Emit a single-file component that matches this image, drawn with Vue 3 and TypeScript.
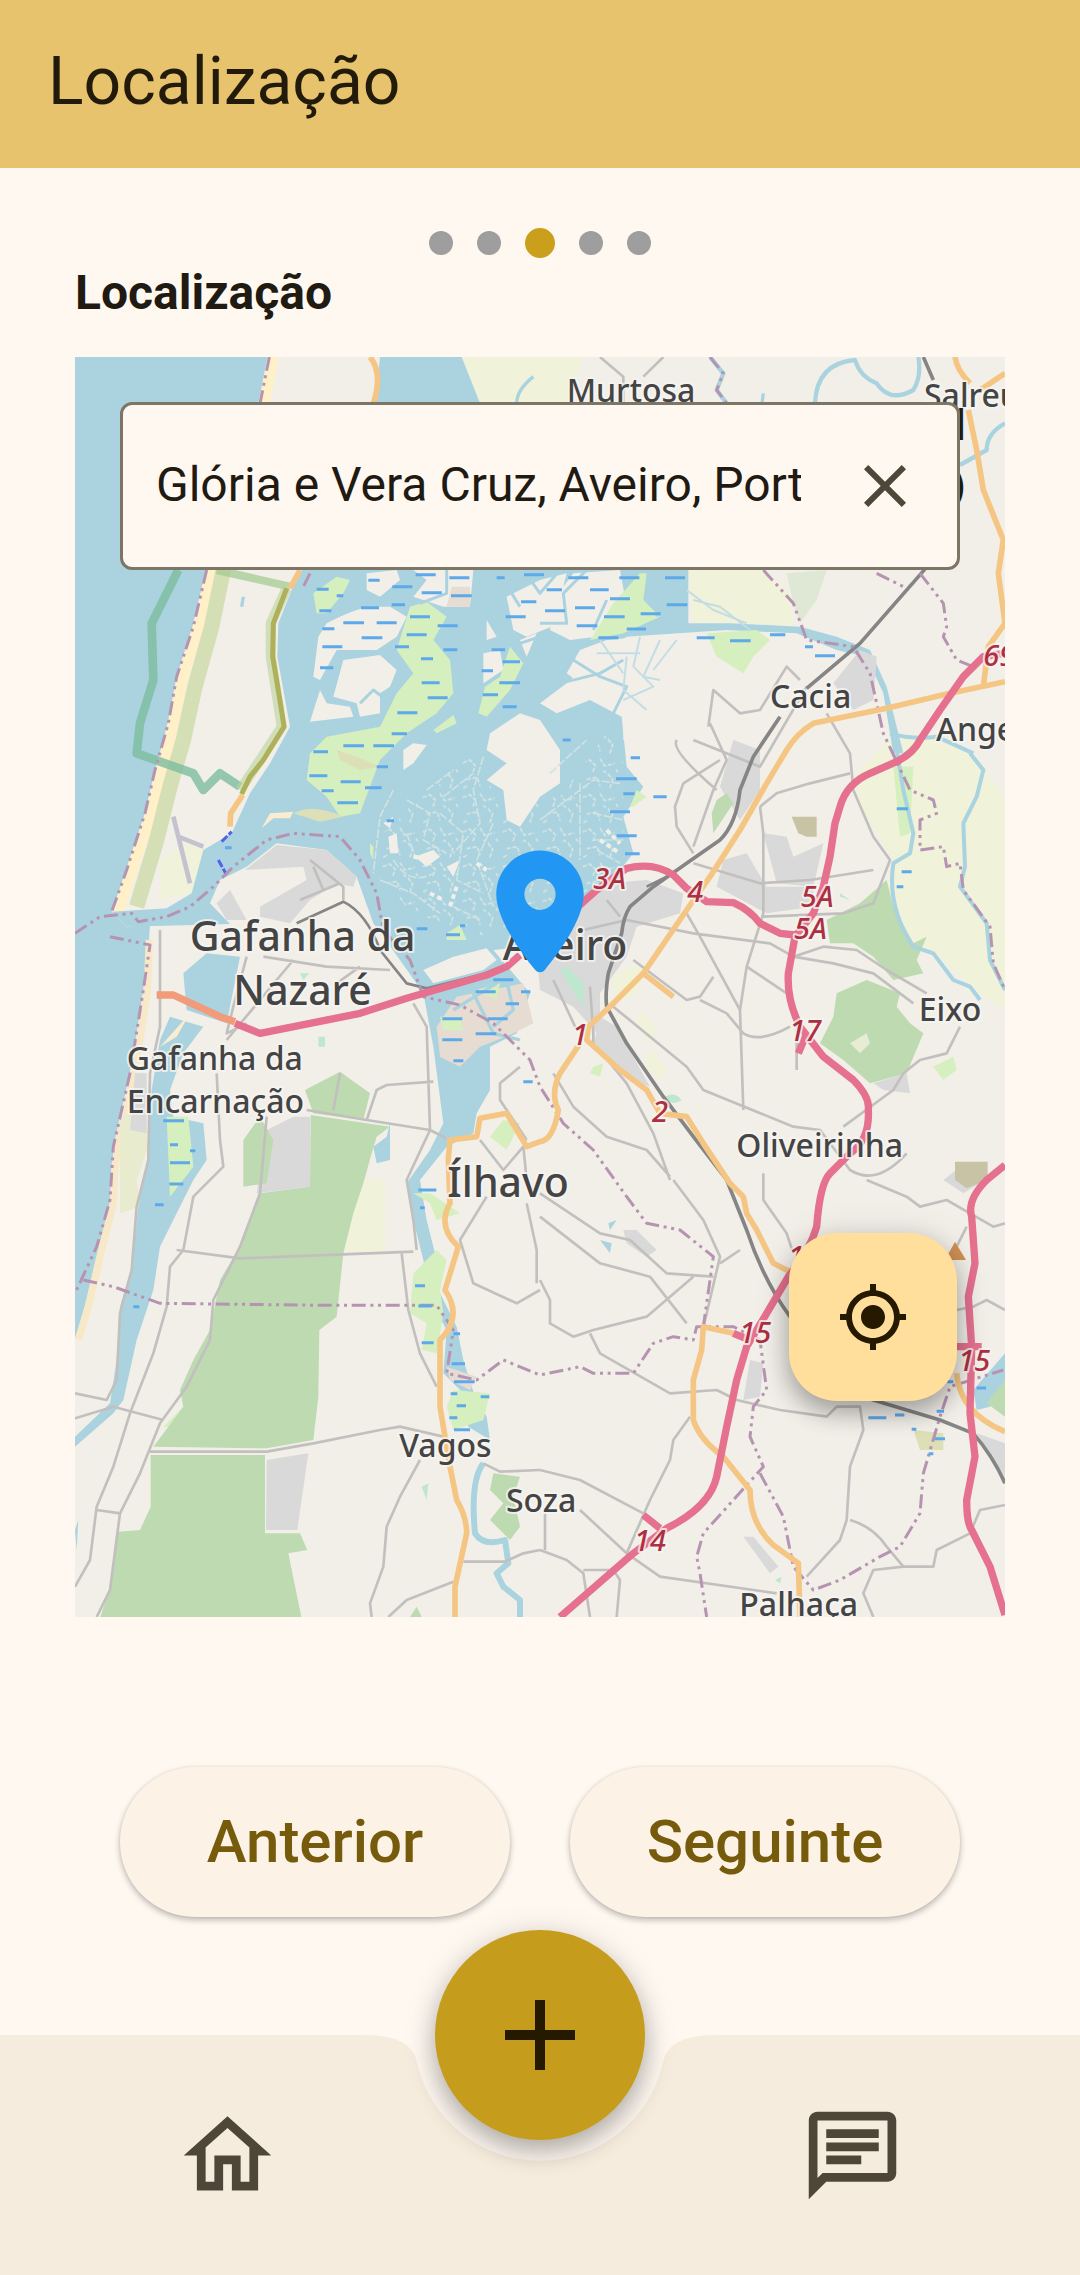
<script setup lang="ts">
import { ref } from 'vue'

interface MapLabel {
  text: string
  x: number
  y: number
  size: 'town' | 'city'
}

interface RoadRef {
  text: string
  x: number
  y: number
}

const address = ref('Glória e Vera Cruz, Aveiro, Portugal')
const steps = [1, 2, 3, 4, 5]
const currentStep = ref(3)

const labels: MapLabel[] = [
  { text: 'Murtosa', x: 1520, y: 185, size: 'town' },
  { text: 'Salreu', x: 2592, y: 202, size: 'town' },
  { text: 'Cacia', x: 2130, y: 1105, size: 'town' },
  { text: 'Angeja', x: 2628, y: 1202, size: 'town' },
  { text: 'Gafanha da', x: 389, y: 1832, size: 'city' },
  { text: 'Nazaré', x: 520, y: 1995, size: 'city' },
  { text: 'Gafanha da', x: 200, y: 2190, size: 'town' },
  { text: 'Encarnação', x: 200, y: 2318, size: 'town' },
  { text: 'Aveiro', x: 1328, y: 1860, size: 'city' },
  { text: 'Eixo', x: 2576, y: 2042, size: 'town' },
  { text: 'Oliveirinha', x: 2029, y: 2450, size: 'town' },
  { text: 'Ílhavo', x: 1162, y: 2570, size: 'city' },
  { text: 'Vagos', x: 1018, y: 3350, size: 'town' },
  { text: 'Soza', x: 1338, y: 3515, size: 'town' },
  { text: 'Palhaça', x: 2038, y: 3828, size: 'town' },
]

const roadRefs: RoadRef[] = [
  { text: '3A', x: 1600, y: 1648 },
  { text: '4', x: 1882, y: 1687 },
  { text: '5A', x: 2222, y: 1702 },
  { text: '5A', x: 2202, y: 1798 },
  { text: '17', x: 2188, y: 2104 },
  { text: '1', x: 1536, y: 2114 },
  { text: '2', x: 1776, y: 2346 },
  { text: '15', x: 2038, y: 3008 },
  { text: '14', x: 1722, y: 3634 },
  { text: '15', x: 2695, y: 3092 },
  { text: '69', x: 2770, y: 978 },
  { text: '16', x: 2184, y: 2782 },
]

const marshPoints: [number, number, number][] = [
  [770, 748, 36], [778, 812, 36], [787, 866, 36], [787, 920, 60], [780, 983, 40], [925, 721, 34],
  [997, 740, 60], [1067, 704, 60], [1085, 758, 60], [1168, 713, 60], [1173, 767, 62], [903, 803, 54],
  [995, 794, 40], [850, 848, 62], [950, 848, 60], [905, 893, 62], [1050, 830, 60], [1040, 884, 60],
  [1005, 920, 42], [1133, 857, 60], [1150, 929, 42], [1083, 956, 36], [1085, 1028, 54], [1103, 1073, 60],
  [1012, 1118, 60], [995, 1181, 46], [850, 1217, 62], [940, 1217, 62], [760, 1235, 44], [1392, 704, 60],
  [1383, 785, 46], [1337, 830, 60], [1295, 929, 40], [1328, 965, 52], [1265, 992, 34], [1318, 1028, 62],
  [1268, 1064, 46], [1328, 1100, 42], [1310, 713, 24], [830, 767, 20], [1525, 713, 60], [1678, 713, 60],
  [1815, 713, 60], [1460, 749, 46], [1590, 749, 56], [1650, 776, 60], [1455, 812, 60], [1545, 803, 60],
  [1820, 794, 62], [1632, 830, 62], [1742, 821, 60], [1550, 857, 62], [1700, 867, 58], [1615, 893, 60],
  [2010, 902, 62], [1910, 893, 54], [2130, 884, 46], [2265, 947, 60], [2235, 920, 24], [1508, 1200, 24],
  [1712, 1253, 28], [748, 1307, 54], [842, 1325, 60], [785, 1352, 36], [832, 1388, 62], [950, 1280, 34],
  [915, 1343, 50], [980, 1442, 22], [1070, 1766, 32], [1158, 1784, 42], [1200, 1757, 16], [1300, 1919, 60],
  [1247, 1955, 60], [1383, 1955, 28], [1337, 1991, 40], [1147, 2036, 60], [1283, 2036, 60], [1147, 2099, 60],
  [1247, 2081, 62], [1180, 2162, 30], [1390, 2225, 28], [310, 2342, 62], [330, 2414, 24], [330, 2468, 60],
  [390, 2432, 16], [495, 1523, 20], [1668, 1316, 62], [1690, 1361, 34], [1780, 1370, 40], [1650, 1415, 60],
  [1670, 1487, 60], [1695, 1541, 44], [2510, 1406, 34], [2525, 1595, 30], [2510, 1640, 20], [328, 2532, 42],
  [285, 2594, 26], [1075, 2550, 54], [1080, 2603, 14], [1065, 2837, 30], [1075, 2898, 40], [1085, 3008, 36],
  [1180, 2981, 20], [1175, 3071, 40], [1182, 3125, 62], [1172, 3161, 20], [1190, 3197, 28], [1168, 3233, 24],
  [1182, 3269, 48], [1262, 3170, 26], [220, 2900, 18], [2425, 3233, 54], [2505, 3225, 28], [2555, 3268, 14],
  [2630, 3214, 22], [2625, 3296, 30], [2606, 3341, 14], [2750, 3144, 28], [2662, 3125, 18],
]

const marshPath = marshPoints.map(([x, y, w]) => `M${x} ${y}h${w}`).join('')
</script>

<template>
  <div class="page">
    <header class="app-bar">
      <h1>Localização</h1>
    </header>

    <main class="content">
      <div class="steps">
        <span
          v-for="step in steps"
          :key="step"
          class="step"
          :class="{ active: step === currentStep }"
        ></span>
      </div>

      <h2>Localização</h2>

      <section class="map">
        <svg class="map-canvas" viewBox="45 51 2790 3780" aria-hidden="true">
          <defs>
            <pattern id="salt-pans" width="120" height="104" patternUnits="userSpaceOnUse">
              <path d="M8 20L30 12 46 28 38 50M60 8L74 30 104 22M20 70L52 64 60 90M84 54L98 70 90 96M70 44L78 50M10 96L24 88M108 40L114 48" fill="none" stroke="#d6e4e3" stroke-width="5" stroke-dasharray="13 5" />
            </pattern>
          </defs>
          <rect x="45" y="51" width="2790" height="3780" fill="#f2efe9" />

          <!-- farmland -->
          <g fill="#f0f2da">
            <path d="M1205 51H1570L1520 190H1260Z" />
            <path d="M1885 690H2110L2190 760 2200 860 2070 850 1900 865Z" />
            <path d="M2480 1200L2620 1190 2740 1240 2835 1370V2010L2760 1960 2640 1850 2520 1800 2480 1640 2500 1560 2400 1400 2380 1310Z" />
            <path d="M300 1560L390 1500 440 1530 395 1660 300 1680Z M905 2520H975V2735H850Z" />
            <path d="M1660 1900L1760 1870 1730 1960 1660 1990Z M1740 2010L1790 2060 1770 2110 1730 2060Z M1770 2130L1825 2190 1800 2220 1750 2180Z" />
          </g>

          <!-- ocean and coast -->
          <path d="M45 51H628L600 190 440 690 400 860 350 1010 325 1150 285 1290 255 1420 200 1590 155 1715 200 1760 270 1755 265 1830 250 1950 230 2080 210 2200 180 2330 160 2420 155 2580 110 2750 75 2900 45 3000Z" fill="#aad3df" />
          <path d="M640 51L612 190 455 690 415 860 368 1010 340 1150 305 1290 273 1420 215 1590 175 1715" class="line" stroke="#fff0c8" stroke-width="34" />
          <path d="M490 690L455 860 405 1040 370 1200 330 1340 290 1500 230 1700" class="line" stroke="#d5dfb5" stroke-width="46" />
          <path d="M268 1800L262 1950 240 2100 215 2230 185 2360 165 2480 160 2590 120 2750 85 2900 55 3000" class="line" stroke="#f7e9c8" stroke-width="22" />
          <path d="M180 2330L250 2300 265 2420 230 2520 240 2600 180 2620Z" fill="#e8ebce" />

          <!-- lagoon -->
          <g fill="#aad3df">
            <path d="M960 51H1205L1260 190H945Z" />
            <path d="M725 690L695 750 655 850 652 950 690 1160 630 1270 570 1360 515 1480 430 1530 395 1660 320 1705 155 1715 200 1760 510 1752 450 1690 480 1620 560 1580 650 1510 800 1530 890 1610 940 1750 1020 1860 1090 1960 1120 2120 1150 2350 1110 2430 1040 2530 1060 2640 1090 2760 1110 2880 1160 2970 1150 3100 1210 3160 1225 3260 1290 3300 1280 3230 1245 3170 1210 3060 1190 2960 1140 2860 1130 2760 1100 2640 1080 2520 1160 2420 1240 2380 1250 2320 1290 2250 1290 2120 1370 2080 1410 1960 1300 1830 1400 1820 1460 1780 1560 1690 1680 1590 1720 1540 1690 1430 1750 1340 1700 1280 1685 1130 1590 1080 1490 1120 1440 1090 1520 1030 1610 950 1700 890 2000 870 2210 880 2330 930 2420 950 2470 1060 2500 1240 2530 1240 2480 1040 2430 930 2330 890 2220 860 2010 850 1885 850 1885 690Z" />
            <path d="M370 1900L440 1840 540 1850 500 2050 380 2010Z M300 2100L330 2030 430 2060 370 2140 330 2250 340 2330 430 2350 440 2460 400 2520 350 2620 300 2720 280 2850 230 3000 190 3180 160 3220 45 3320V3290L150 3190 170 3060 180 2900 215 2780 235 2600 260 2470 275 2250Z" />
            <path d="M980 2390L990 2350 990 2460 950 2470 940 2420Z M1620 2700L1655 2710 1650 2740Z M1645 2650L1670 2640 1650 2670Z M2740 3150L2835 3040V3120L2790 3200 2750 3210Z" />
          </g>
          <path d="M45 3570L55 3540 50 3630Z" fill="#aad3df" />
          <path d="M1100 1350L1230 1250 1320 1380 1500 1370 1640 1180 1690 1200 1690 1560 1560 1690 1280 1790 1060 1720 960 1620 970 1480Z" fill="url(#salt-pans)" />

          <!-- lagoon islands -->
          <g fill="#f2efe9">
            <path d="M920 700L1010 690 1020 720 960 770 920 750Z M1060 690L1240 690 1230 800 1150 800 1060 770 1100 720Z M860 820L920 800 990 800 1040 830 1010 890 950 930 830 930 780 1020 760 1010 775 890 800 850Z" />
            <path d="M850 960L960 945 1010 990 990 1040 960 1060 960 1120 900 1130 890 1090 820 1070Z M780 1050L800 1090 870 1100 880 1130 750 1145Z" />
            <path d="M1280 840L1310 890 1280 900Z M1340 770L1440 720 1520 700 1500 780 1500 850 1400 890 1360 870Z M1270 940L1320 930 1330 990 1270 1030Z M1380 900L1430 880 1400 950Z" />
            <path d="M1290 1180L1380 1120 1440 1140 1500 1230 1500 1330 1440 1370 1380 1460 1340 1440 1330 1350 1280 1320 1340 1270 1280 1230Z M1540 700L1680 690 1700 800 1610 890 1530 900 1470 870 1480 780Z M1560 930L1640 900 1880 880 1870 1000 1830 1060 1800 1190 1690 1200 1690 1080 1600 1060 1520 1000Z" />
            <path d="M1030 1230L1060 1210 1100 1215 1060 1270 1030 1290Z M970 1450L1000 1430 990 1465Z M985 1490L1010 1480 1015 1540 990 1540Z M1065 1550L1120 1530 1140 1550 1100 1580Z M1160 1580L1200 1560 1180 1610Z" />
            <path d="M1090 1890L1180 1850 1280 1825 1310 1860 1270 1890 1120 1930Z M1390 2050L1500 2030 1560 2100 1470 2260 1430 2330 1330 2300 1310 2200Z" />
          </g>
          <g fill="#d6efbf">
            <path d="M760 760L830 710 870 720 850 760 800 820 770 820Z M1050 800L1100 785 1160 830 1120 900 1170 960 1180 1060 1130 1120 1040 1180 960 1260 900 1420 840 1430 800 1370 740 1320 750 1240 800 1190 960 1160 1010 1060 1060 1000 1010 930Z" />
            <path d="M1120 1170L1180 1125 1190 1150 1130 1180Z M1350 920L1390 970 1350 1050 1280 1130 1255 1120 1275 1040 1320 1010Z M1590 900L1660 790 1740 700 1760 700 1750 780 1800 830 1690 880Z M1940 880L2090 870 2130 900 2080 950 2050 1000 1970 950Z" />
            <path d="M1060 2560L1110 2560 1200 2620 1130 2640 1110 2590Z M1060 2800L1130 2730 1160 2760 1140 2850 1150 2920 1130 3040 1085 3030 1100 2950 1050 2920Z M1180 3150L1290 3160 1270 3240 1180 3270 1160 3200Z M320 2330L385 2330 400 2480 330 2570Z M930 1510L940 1520 940 1560 930 1540Z M1160 1780L1200 1755 1220 1800 1160 1800Z" />
            <path d="M1710 1400L1730 1350 1760 1370 1720 1400Z M1600 2180L1630 2170 1620 2210 1590 2200Z M2620 2180L2680 2150 2690 2190 2650 2220Z M1380 2350L1330 2340 1290 2390 1340 2430Z M2500 1280L2560 1280 2550 1480 2520 1490Z M310 3260L370 3200 370 3260Z" />
          </g>
          <path d="M700 1420Q760 1390 850 1430L780 1445Z M830 1230L890 1250 960 1280 900 1290 840 1260Z M2560 3270L2650 3280 2650 3330 2580 3330Z" fill="#dde0b6" />
          <path d="M605 1465L630 1420 700 1415 690 1435 640 1435Z M300 2120L390 2020 350 2090Z" fill="#f9ecd0" />
          <path d="M1190 1970L1390 1930 1420 2050 1360 2080 1260 2120 1200 2180 1140 2150 1130 2060Z M1160 3080L1250 3110 1230 3150 1170 3120Z M1175 740H1230V800H1160Z" fill="#e7dcd2" />
          <path d="M1140 2030L1200 2030 1210 2070 1150 2070Z M1250 1950L1320 1930 1310 1980Z" fill="#d6efbf" />
          <path d="M1240 1960L1300 2080 1380 2100M1180 2010L1260 1960 1310 1930M1340 1920L1360 2010 1300 2060" class="line" stroke="#aad3df" stroke-width="10" />

          <!-- lagoon channels -->
          <path d="M1050 690L1000 760 900 800 780 850M1160 690V760L1080 790M1390 690L1440 760 1500 690M1300 900L1380 910 1440 890M1330 720L1380 800M1440 850L1520 850 1510 760 1580 690M1640 780L1600 870M1820 700L1790 830M1690 960L1620 1000 1500 1030M1540 960L1620 1010 1700 1040 1660 1120M900 1090L940 1050 980 1080" class="line" stroke="#aad3df" stroke-width="9" />
          <path d="M1700 950L1690 1050 1760 1110M1800 900L1750 1010 1800 1020M1620 900L1690 1000M1740 890L1720 980 1780 1040 1690 1080M1610 940L1740 940M1850 900L1780 990M1880 750L1960 810 2060 850M1900 780L1980 800 2070 870" class="line" stroke="#c3dde3" stroke-width="6" />
          <path d="M1270 1250L1240 1350 1260 1450 1180 1540M1150 1370L1240 1300M1100 1350L1180 1290M1000 1350L960 1430 940 1600M1040 1380L1110 1420 1090 1500 1160 1540M1140 1420L1210 1480 1190 1620 1270 1660M1000 1560Q1050 1640 1120 1600M1040 1480L1070 1560M1300 1450L1250 1560 1300 1700M1440 1440L1600 1320 1680 1330M1560 1330V1560M1600 1500H1690M1600 1420L1690 1440M1610 1530L1680 1570M960 1620L1060 1660 1140 1720M1180 1700L1260 1740M1470 1300L1580 1200" class="line" stroke="#d0e2e3" stroke-width="5" stroke-dasharray="26 6" />
          <path d="M1060 1550L1130 1560M1110 1660L1150 1680M1190 1640L1170 1700M1250 1570L1280 1590M1620 1500L1680 1540M1640 1470L1680 1510M1000 1500V1540" class="line" stroke="#f2efe9" stroke-width="12" stroke-dasharray="14 10" />

          <!-- harbour and built-up areas -->
          <g fill="#d9d9d9">
            <path d="M555 1590L650 1515 800 1530 890 1610 880 1640 830 1630 750 1680 690 1750 600 1730 600 1700 740 1620 730 1580Z M470 1690L510 1650 560 1740 500 1740Z" />
            <path d="M620 2370L700 2330 750 2330V2540L590 2560Z M620 3360L745 3340 712 3570H618Z M225 2200H260V2380L210 2370Z" />
            <path d="M2320 1030L2400 930 2450 950 2440 1080 2380 1110Z M2020 1200L2100 1230 2100 1350 2040 1440 1980 1340Z M1990 1560L2060 1540 2120 1640 2260 1640 2260 1700 2120 1720 1970 1640Z M2110 1480L2180 1490 2200 1550 2290 1510 2260 1640 2150 1630Z" />
            <path d="M1530 1700L1640 1630 1760 1620 1870 1660 1860 1720 1730 1760 1700 1850 1620 1960 1620 2090 1540 2000 1440 1950 1430 1840 1500 1800Z M1620 2030L1670 2060 1770 2240 1710 2220 1600 2120Z M2440 2230L2540 2200 2550 2260 2470 2250Z M1690 2670L1730 2670 1790 2730 1760 2750 1700 2710Z M2070 3060L2110 3070 2100 3170 2050 3180Z M2050 3590L2080 3590 2155 3680 2130 3700Z M2750 3280L2835 3310V3410Z M2650 2520L2700 2480 2760 2530 2710 2560Z" />
          </g>
          <path d="M2195 1430H2270V1490H2240L2215 1480Z M2685 2465H2783V2520L2720 2545 2685 2520Z" fill="#c8c3a4" />
          <path d="M1500 1890L1520 1880 1570 1930 1570 2000 1550 1970ZM1810 2275Q1840 2250 1865 2280 1840 2300 1810 2275ZM2340 1660L2370 1680 2340 1670ZM2145 3720L2165 3710 2160 3730ZM775 2090H795V2120H775ZM720 1900H748L730 1920ZM1085 3440L1105 3430 1100 3480Z" fill="#bde8cf" />

          <!-- forests -->
          <g fill="#bddab1">
            <path d="M735 2250L840 2195 930 2260 910 2340 760 2320Z M752 2325L990 2360 950 2390 935 2440 910 2530 880 2620 850 2740 830 2930 778 2970 775 3170 760 3300 620 3325 280 3320 370 3200 360 3150 400 3060 450 2970 480 2820 540 2720 600 2560 750 2540Z" />
            <path d="M272 3345H615V3580H720L742 3630 685 3640 725 3835H120L150 3740 175 3575 240 3570 272 3500Z M550 2400L600 2330 640 2400 620 2530 550 2540Z" />
            <path d="M2300 1740L2400 1690 2480 1620 2500 1700 2560 1810 2600 1790 2570 1860 2590 1900 2500 1920 2440 1850 2380 1810 2310 1810Z M2330 1960L2420 1920 2520 1960 2510 2000 2550 2050 2590 2080 2540 2200 2430 2230 2350 2160 2280 2110 2320 2030Z" />
            <path d="M1970 1380L2000 1360 2020 1390 1980 1450 1960 1480 1955 1420Z M1300 3400L1380 3410 1360 3470 1380 3560 1350 3600 1290 3540 1330 3490 1290 3450Z M2780 3190L2835 3120V3230Z M1050 3831L1070 3800 1085 3831Z" />
            <path d="M2180 700L2300 690 2270 780 2220 850 2200 790Z" opacity="0.35" />
          </g>
          <path d="M2370 2110L2420 2080 2430 2110 2400 2140Z" fill="#e7ecd4" />

          <!-- reserve borders -->
          <path d="M355 690L275 850 280 1020 240 1150 230 1240 400 1300 430 1350 480 1300 540 1340" class="line" stroke="#7cbd9e" stroke-width="26" opacity="0.8" />
          <path d="M470 690L690 740" class="line" stroke="#9fc98b" stroke-width="24" opacity="0.7" />
          <path d="M680 745L632 850 632 950 665 1160 600 1260 560 1320 540 1350" class="line" stroke="#b9d49b" stroke-width="30" opacity="0.6" />

          <!-- rivers -->
          <g class="line" stroke="#a9d3df">
            <path d="M2265 190Q2270 70 2385 60Q2400 110 2450 130Q2490 190 2560 150 2585 110 2575 51M2835 250Q2780 280 2780 330L2700 375M1950 51L1990 100 1970 150 2000 190" stroke-width="13" />
            <path d="M2500 1170L2530 1350 2560 1480 2550 1540 2500 1570Q2480 1700 2560 1820L2620 1840 2680 1920 2730 1940 2760 1980M2730 1240L2770 1290 2750 1370 2710 1450 2715 1580 2700 1640 2780 1750 2790 1860 2835 1950M2490 1180Q2560 1200 2630 1190L2740 1240" stroke-width="12" />
            <path d="M1270 3370Q1230 3420 1245 3580 1270 3620 1335 3600L1345 3670 1310 3700 1330 3740 1380 3780 1380 3831" stroke-width="18" />
            <path d="M1420 110Q1370 150 1370 190M2110 160L2105 200M550 770L545 800" stroke-width="10" />
          </g>

          <!-- minor roads -->
          <g class="line" stroke="#c2c0be" stroke-width="8">
            <path d="M1620 51L1690 110 1690 190M1810 51L1750 110M2240 1040L2100 1280 1900 1200M1950 1150L2000 1260 1960 1350 1900 1520M1945 1160L1960 1050 2040 1120 2100 1110 2180 980 2220 1020M1980 1260L1870 1330 1845 1400 1850 1460 1900 1540M1850 1200Q1830 1230 1970 1350" />
            <path d="M2300 1120L2370 1240 2380 1350 2440 1490 2490 1560 2440 1690 2350 1720 2110 1730M2100 1400L2110 1480 2110 1720 2060 1880 2040 2010 2050 2310M2370 1300L2250 1330 2150 1360 2100 1400M1900 1570L2000 1600 2100 1630 2250 1620 2440 1590" />
            <path d="M1570 1770L1700 1740 1900 1780 2130 1810 2200 1850 2320 1870 2440 1900 2560 1990M2200 1850L2290 1820 2390 1830 2480 1890 2600 1960M2700 2060L2660 2140 2580 2160 2530 2200 2500 2250 2350 2360M1880 1720L1920 1790 2040 2010M1720 1860L1840 1950 1880 1980 1920 1970 1960 1910M1920 1980L2000 2020 2050 2080Q2100 2110 2190 2060M2060 1880L2180 1960 2210 2020 2210 2190" />
            <path d="M1660 2000L1880 2180 1930 2250 2200 2360 2280 2370 2370 2490Q2450 2540 2540 2440M1480 2200L1540 2300 1640 2390 1760 2430 1830 2510M1610 2120L1700 2230 1780 2380 1830 2520M1640 1680L1680 1730M1480 1920L1550 2070M1590 1940L1600 2080 1600 2120" />
            <path d="M1840 2520L1930 2640 1980 2750 1940 2920 1930 2960M1440 2630L1620 2770 1770 2810 1880 2950M1440 2560L1620 2680 1710 2700 1820 2800 1960 2810M1980 2770L2040 2730M1900 2810L1760 2930 1600 2970 1540 2990 1470 2950 1470 2880 1440 2820M1590 2980L1620 3040 1830 3160 1970 3150 2030 3180 2160 3210 2300 3230 2330 3200 2400 3200 2410 3270 2370 3380 2360 3540 2340 3600 2240 3710M2370 3540Q2440 3560 2480 3620L2530 3680 2620 3680 2630 3630 2730 3580 2760 3510 2835 3495M2530 3680L2440 3690 2410 3760 2440 3831" />
            <path d="M2110 2500L2110 2580 2180 2680 2200 2740M2420 2520L2540 2570 2580 2600 2660 2580 2730 2620 2800 2660 2835 2650M2720 2660L2690 2720M2690 2910L2740 2900 2780 2880 2835 2910M1440 3390L1560 3420 1750 3520M1890 3230L1840 3300 1830 3360 1770 3480 1700 3640 1800 3710 2150 3760M1560 3510L1700 3640M1440 3630L1520 3660 1570 3700 1590 3831M1570 3690H1660L1680 3720 1670 3831M1455 3520V3630" />
            <path d="M610 1850L800 1880 990 1890M700 1860L600 1980 500 2100M560 1850L520 2000 500 2080 560 2050M900 1880L830 1930M470 2200L480 2400 490 2480 400 2570 370 2730 330 2780 320 2900 280 3040 210 3220 160 3380 110 3500 90 3660 45 3740M620 2330L600 2560 540 2720 460 2880 450 3000 380 3140 300 3250 240 3400 180 3520 150 3750 110 3831M350 2730L540 2755 1060 2735M270 3335H620L760 3310 960 3270 1020 3260 1150 3290" />
            <path d="M1060 1990L1100 2060 1110 2370 1160 2395M920 2340L740 2310M1110 2370L920 2340 950 2250 980 2235 1120 2225M1110 2370L1040 2520 1060 2640 1070 2730M1025 2740L1045 2910 1080 3040 1130 3140M300 1770V2060L270 2200 265 2460 230 2600 215 2790 180 2920 170 3120 140 3180 45 3160M45 3235L160 3200 310 3240M110 3510L180 3520M1280 2570L1200 2700 1240 2830 1370 2890 1440 2850M1400 2590L1430 2730 1430 2830M1080 3360L1020 3470 980 3560 970 3680 930 3790 935 3831M1270 3370L1320 3395 1440 3390M1210 3665H1335L1390 3640 1440 3630M985 3831L1040 3780 1180 3725M1260 2400L1330 2490 1390 2420 1400 2520M1380 2180L1320 2230 1320 2280 1400 2400M840 2200L820 2310M750 1560L850 1640 850 1680M760 1580L790 1650M720 1680L840 1630" />
          </g>
          <path d="M340 1430L390 1630M355 1490L430 1520" class="line" stroke="#c4c2cf" stroke-width="14" />
          <path d="M485 1505L515 1475M475 1560L500 1605" class="line" stroke="#5262ee" stroke-width="9" stroke-dasharray="24 6" />

          <!-- railways -->
          <g class="line" stroke="#858585" stroke-width="11">
            <path d="M2590 51L2620 120M2610 670L2400 910 2240 1045M2160 1130L2080 1250 2040 1350Q2030 1450 1980 1500L1880 1570 1780 1640 1710 1700Q1690 1730 1685 1780L1645 1900Q1635 1960 1640 2000L1700 2110 1810 2270 1900 2390 2000 2520 2060 2670Q2110 2820 2190 2930L2300 3120 2440 3180 2640 3240 2740 3280Q2800 3350 2835 3430" />
            <path d="M710 1750L850 1685Q920 1720 960 1830L1040 1930 1100 1945 1280 1900M1840 1600L1760 1640" stroke-width="8" />
          </g>

          <!-- administrative borders -->
          <g class="line" stroke="#b694b1" stroke-width="9" stroke-dasharray="42 14 9 14 9 14">
            <path d="M628 51L600 190M440 690L400 860 350 1010 325 1150 285 1290 255 1420 200 1590 155 1715M750 700L725 750M45 1780L120 1730 215 1720 235 1745 320 1730 390 1700 460 1640 520 1580 620 1500 700 1480 840 1490 900 1560 950 1660 970 1770 1050 1860 1090 1970 1200 1995 1300 2050 1410 2160 1440 2240 1510 2350 1600 2430 1700 2570 1760 2650 1860 2670 1960 2750 1930 2960M150 1790L270 1815 250 1950 210 2200 160 2420 150 2580 110 2720 45 2860" />
            <path d="M70 2820L160 2840 300 2890 800 2896 1130 2896 1180 2970 1160 3100 1250 3120 1330 3060 1440 3105 1560 3080 1600 3100 1720 3100 1780 3010 1840 2990 1900 3000 1910 2960 2020 2960 2100 3000 2120 3150 2080 3200 2070 3290 2110 3380 1930 3580 1910 3650 1920 3700 1940 3831M2100 3400L2170 3530 2200 3680 2260 3750 2340 3720 2460 3650 2520 3620 2580 3520 2590 3400 2640 3230 2670 3140 2830 3090" />
            <path d="M1950 51L1990 100 1970 150 2000 190M2110 690L2200 790 2240 900 2380 920 2430 1000 2470 1180 2550 1350 2620 1380 2630 1420 2580 1440V1530L2650 1520 2660 1580 2700 1570 2710 1650 2790 1760 2800 1870 2835 1950M2450 700L2530 740M2580 700L2650 790 2660 860 2650 890 2690 960 2740 980" />
          </g>

          <path :d="marshPath" class="line" stroke="#5da9ea" stroke-width="9" />

          <!-- main roads -->
          <g class="line" stroke="#f5c683" stroke-width="17">
            <path d="M930 51Q970 100 940 190M720 690L690 745M548 1365L512 1420 510 1460" />
            <path d="M2835 1025L2670 1060 2480 1105 2260 1150Q2210 1180 2180 1230L2120 1330 2040 1470 1950 1610 1880 1710 1750 1900 1650 2000 1585 2060 1580 2100 1680 2190 1760 2250 1800 2320 1880 2330 1930 2410 2010 2530 2050 2570 2060 2620 2090 2670 2140 2770 2190 2795M1750 1900L1840 1970" />
            <path d="M1560 2110L1500 2200Q1470 2260 1495 2310 1480 2400 1440 2405L1400 2420 1340 2320 1260 2335 1250 2390 1170 2400 1165 2455 1170 2590Q1130 2660 1195 2720L1155 2850Q1210 2930 1140 3000V3200L1170 3380 1190 3480Q1220 3530 1220 3580L1185 3740V3831" />
            <path d="M2020 2980L1930 2960 1925 3030 1900 3120V3240Q1920 3300 1990 3350L2070 3450Q2070 3550 2140 3615L2215 3670 2220 3831M2690 3100Q2700 3220 2835 3275" />
            <path d="M2685 51Q2690 90 2730 130M2725 210L2750 330 2770 450 2830 600 2815 700 2835 850 2785 920 2770 1040M2760 150L2835 100" />
          </g>
          <path d="M680 745L640 850 638 950Q660 1080 672 1160L610 1260 570 1310 545 1362" class="line" stroke="#aeb05a" stroke-width="15" />
          <path d="M290 1965H340L480 2030 525 2045" class="line" stroke="#f29b7b" stroke-width="22" />
          <g class="line" stroke="#e5718f" stroke-width="22">
            <path d="M525 2050L600 2080 900 2020 1040 1975 1280 1905 1340 1880 1380 1845M1520 1730L1610 1650 1700 1585Q1780 1565 1840 1605L1880 1645 1940 1685 2020 1688Q2070 1710 2100 1750L2160 1780 2205 1785" />
            <path d="M2835 940L2770 950 2710 1010 2640 1110 2580 1200Q2560 1240 2510 1265L2430 1300Q2360 1330 2340 1400L2325 1450 2310 1550 2290 1640 2260 1720 2205 1790 2185 1900Q2180 1980 2220 2060L2290 2150 2380 2220Q2430 2270 2425 2310 2430 2400 2370 2440L2310 2500Q2280 2530 2270 2660 2250 2730 2185 2810L2120 2920 2060 3020 2030 3120 2000 3260 1970 3410Q1950 3500 1820 3565L1720 3640 1500 3831M1750 3525L1800 3565M2215 2140L2240 2080M2020 2980L2070 3000M2690 3020H2765" />
            <path d="M2835 2475L2780 2520Q2720 2580 2735 2630L2745 2770 2725 2870 2735 3020 2730 3220 2745 3350 2720 3480Q2720 3550 2735 3570L2790 3680 2835 3825" />
          </g>
          <path d="M2655 2760L2685 2705 2718 2760Z" fill="#cf9153" />

          <!-- place names and exit numbers -->
          <g class="place">
            <text v-for="label in labels" :key="label.text + label.y" :x="label.x" :y="label.y" :class="label.size">{{ label.text }}</text>
          </g>
          <g class="exit">
            <text v-for="(exit, i) in roadRefs" :key="i" :x="exit.x" :y="exit.y">{{ exit.text }}</text>
          </g>

          <!-- selected position -->
          <g transform="translate(1215 1494) scale(18.75)">
            <path fill="#2196f3" d="M12 2C8.13 2 5 5.13 5 9c0 4.17 4.42 9.92 6.24 12.11.4.48 1.13.48 1.53 0C14.58 18.92 19 13.17 19 9c0-3.87-3.13-7-7-7zm0 9.5a2.5 2.5 0 0 1 0-5 2.5 2.5 0 0 1 0 5z" />
          </g>
        </svg>

        <p class="hint">d<br />)</p>

        <form class="search" @submit.prevent>
          <input v-model="address" type="text" aria-label="Morada" />
          <button type="button" class="clear" aria-label="Limpar" @click="address = ''">
            <svg viewBox="0 0 24 24" aria-hidden="true">
              <path d="M19 6.41L17.59 5 12 10.59 6.41 5 5 6.41 10.59 12 5 17.59 6.41 19 12 13.41 17.59 19 19 17.59 13.41 12z" />
            </svg>
          </button>
        </form>

        <button type="button" class="locate" aria-label="A minha localização">
          <svg viewBox="0 0 24 24" aria-hidden="true">
            <path d="M12 8c-2.21 0-4 1.79-4 4s1.79 4 4 4 4-1.79 4-4-1.79-4-4-4zm8.94 3A8.994 8.994 0 0 0 13 3.06V1h-2v2.06A8.994 8.994 0 0 0 3.06 11H1v2h2.06A8.994 8.994 0 0 0 11 20.94V23h2v-2.06A8.994 8.994 0 0 0 20.94 13H23v-2h-2.06zM12 19c-3.87 0-7-3.13-7-7s3.13-7 7-7 7 3.13 7 7-3.13 7-7 7z" />
          </svg>
        </button>
      </section>

      <div class="actions">
        <button type="button">Anterior</button>
        <button type="button">Seguinte</button>
      </div>
    </main>

    <nav class="bottom-bar">
      <div class="bar-shape" aria-hidden="true">
        <span></span>
        <svg viewBox="0 0 348 240" preserveAspectRatio="none">
          <path d="M0 0Q45 0 51 27A126 126 0 0 0 297 27Q303 0 348 0V240H0Z" />
        </svg>
        <span></span>
      </div>
      <button type="button" class="tab" aria-label="Início">
        <svg viewBox="0 0 24 24" aria-hidden="true">
          <path d="M12 5.69l5 4.5V18h-2v-6H9v6H7v-7.81l5-4.5M12 3L2 12h3v8h6v-6h2v6h6v-8h3L12 3z" />
        </svg>
      </button>
      <button type="button" class="tab" aria-label="Mensagens">
        <svg viewBox="0 0 24 24" aria-hidden="true">
          <path d="M4 4h16v12H5.17L4 17.17V4m0-2c-1.1 0-1.99.9-1.99 2L2 22l4-4h14c1.1 0 2-.9 2-2V4c0-1.1-.9-2-2-2H4zm2 10h8v2H6v-2zm0-3h12v2H6V9zm0-3h12v2H6V6z" />
        </svg>
      </button>
      <button type="button" class="add" aria-label="Adicionar">
        <svg viewBox="0 0 24 24" aria-hidden="true">
          <path d="M19 13h-6v6h-2v-6H5v-2h6V5h2v6h6v2z" />
        </svg>
      </button>
    </nav>
  </div>
</template>

<style>
body {
  margin: 0;
  background: #fff8f1;
}
</style>

<style scoped>
.page {
  display: flex;
  flex-direction: column;
  min-height: 100vh;
  background: #fff8f1;
  color: #1f1b13;
  font-family: Roboto, 'Noto Sans', sans-serif;
}

button {
  padding: 0;
  border: 0;
  font-family: inherit;
  cursor: pointer;
}

.app-bar {
  display: flex;
  align-items: flex-start;
  box-sizing: border-box;
  height: 168px;
  padding: 40px 48px;
  background: #e6c36c;
}

h1 {
  margin: 0;
  color: #221b0c;
  font-size: 66px;
  font-weight: 400;
  line-height: 84px;
}

.content {
  display: flex;
  flex-direction: column;
  flex: 1;
  padding: 60px 75px 0;
}

.steps {
  display: flex;
  align-items: center;
  justify-content: center;
  gap: 24px;
  height: 30px;
}

.step {
  width: 24px;
  height: 24px;
  border-radius: 50%;
  background: #9e9e9e;
}

.step.active {
  width: 30px;
  height: 30px;
  background: #c99f1b;
}

h2 {
  margin: 0 0 29px;
  font-size: 48px;
  font-weight: 700;
  line-height: 70px;
}

.map {
  position: relative;
  overflow: hidden;
}

.map-canvas {
  display: block;
  width: 100%;
  height: auto;
}

.line {
  fill: none;
  stroke-linejoin: round;
}

.place,
.exit {
  font-family: 'Noto Sans', sans-serif;
  font-weight: 500;
  paint-order: stroke;
  stroke: rgba(247, 245, 241, 0.8);
  stroke-width: 12px;
  stroke-linejoin: round;
}

.place {
  fill: #444;
}

.town {
  font-size: 96px;
}

.city {
  font-size: 123px;
}

.exit {
  fill: #ad2f42;
  font-size: 87px;
  font-style: italic;
}

.hint {
  position: absolute;
  top: 39px;
  right: 39px;
  margin: 0;
  font-size: 42px;
  line-height: 60px;
  text-align: right;
}

.search {
  position: absolute;
  top: 45px;
  right: 45px;
  left: 45px;
  display: flex;
  align-items: center;
  box-sizing: border-box;
  height: 168px;
  padding-left: 33px;
  border: 3px solid #7d7667;
  border-radius: 12px;
  background: #fff8f1;
}

.search input {
  flex: 1;
  min-width: 0;
  height: 72px;
  margin-right: 12px;
  padding: 0 0 4px;
  border: 0;
  outline: 0;
  background: none;
  color: #1f1b13;
  font-family: inherit;
  font-size: 48px;
}

.clear {
  display: flex;
  align-items: center;
  justify-content: center;
  width: 144px;
  height: 144px;
  background: none;
  fill: #4d4639;
}

.clear svg,
.locate svg {
  width: 72px;
  height: 72px;
}

.locate {
  position: absolute;
  right: 48px;
  bottom: 216px;
  display: flex;
  align-items: center;
  justify-content: center;
  width: 168px;
  height: 168px;
  border-radius: 48px;
  background: #ffdf9b;
  box-shadow: 0 12px 24px rgba(0, 0, 0, 0.28), 0 3px 36px rgba(0, 0, 0, 0.12);
  fill: #251a00;
}

.actions {
  display: flex;
  gap: 60px;
  margin: 150px 45px 60px;
}

.actions button {
  flex: 1;
  height: 150px;
  padding-bottom: 2px;
  border-radius: 75px;
  background: #fcf2e5;
  box-shadow: 0 3px 6px rgba(0, 0, 0, 0.26), 0 0 3px rgba(0, 0, 0, 0.08);
  color: #755b0b;
  font-size: 60px;
  font-weight: 500;
}

.bottom-bar {
  position: relative;
  display: flex;
  align-items: center;
  justify-content: space-between;
  height: 240px;
  padding: 0 14%;
}

.bar-shape {
  position: absolute;
  inset: 0;
  display: flex;
}

.bar-shape span {
  flex: 1;
  background: #f6ecdd;
}

.bar-shape svg {
  width: 348px;
  height: 240px;
  fill: #f6ecdd;
}

.tab {
  position: relative;
  display: flex;
  align-items: center;
  justify-content: center;
  width: 153px;
  height: 153px;
  background: none;
  fill: #4d4639;
}

.tab svg {
  width: 105px;
  height: 105px;
}

.add {
  position: absolute;
  top: -105px;
  left: calc(50% - 105px);
  display: flex;
  align-items: center;
  justify-content: center;
  width: 210px;
  height: 210px;
  border-radius: 50%;
  background: #c69c1c;
  box-shadow: 0 12px 24px rgba(0, 0, 0, 0.26), 0 3px 36px rgba(0, 0, 0, 0.1);
  fill: #251a00;
}

.add svg {
  width: 120px;
  height: 120px;
}
</style>
